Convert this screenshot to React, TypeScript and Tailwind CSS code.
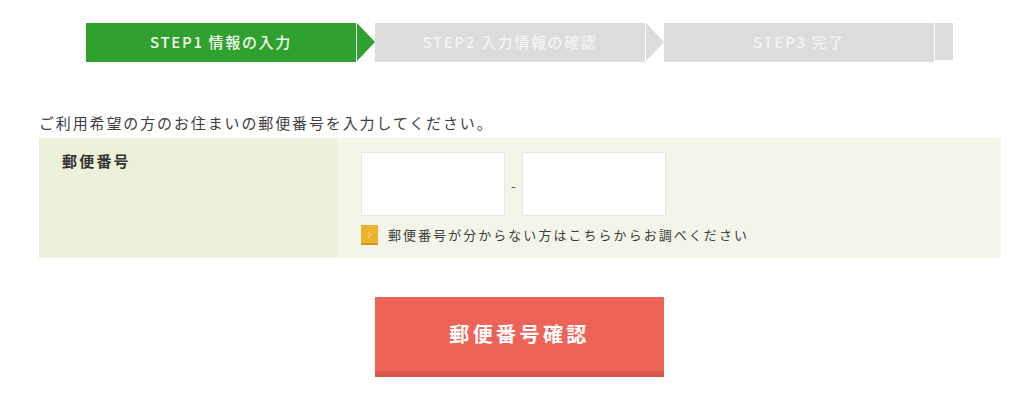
const font = "font-['Noto_Sans_CJK_JP','Noto_Sans',sans-serif]";

function Step({ label, active, arrow }: { label: string; active?: boolean; arrow?: boolean }) {
  return (
    <div
      className={
        "relative flex h-[39px] w-[270px] items-center justify-center text-[15px] font-medium tracking-[1.65px] " +
        (active ? "bg-[#2fa12e] text-[#f4f9f0]" : "bg-[#dcdcdc] text-[#f3f3f3]")
      }
    >
      {label}
      {arrow && (
        <span
          className={
            "absolute left-[271px] top-0 h-0 w-0 border-y-[19.5px] border-l-[18px] border-y-transparent " +
            (active ? "border-l-[#2fa12e]" : "border-l-[#dcdcdc]")
          }
        />
      )}
    </div>
  );
}

export default function App() {
  return (
    <div className={"h-[403px] w-[1024px] overflow-hidden bg-white text-[#333] " + font}>
      {/* Steps */}
      <div className="flex items-start pl-[86px] pt-[23px]">
        <Step label="STEP1 情報の入力" active arrow />
        <div className="w-[19px]" />
        <Step label="STEP2 入力情報の確認" arrow />
        <div className="w-[19px]" />
        <Step label="STEP3 完了" />
        <div className="ml-px h-[37px] w-[18px] bg-[#dcdcdc]" />
      </div>

      <p className="ml-[39px] mt-[50px] text-[15px] leading-[22px] tracking-[1.87px] text-[#3d3d3d]">
        ご利用希望の方のお住まいの郵便番号を入力してください。
      </p>

      {/* Form table */}
      <div className="ml-[39px] mt-[4px] flex h-[120px] w-[962px] bg-[#f2f5e7]">
        <div className="w-[298px] bg-[#ebf0d8] pl-[23px] pt-[11px] text-[15px] font-bold leading-[24px] tracking-[2.2px] text-[#333]">
          郵便番号
        </div>
        <div className="pl-[24px] pt-[14px]">
          <div className="flex items-center">
            <input className="h-[64px] w-[144px] border border-[#e6e8dc] bg-white" />
            <span className="w-[17px] pt-[2px] text-center text-[14px] text-[#555]">-</span>
            <input className="h-[64px] w-[144px] border border-[#e6e8dc] bg-white" />
          </div>
          <a className="mt-[9px] flex items-center text-[13px] leading-[20px] tracking-[2.04px] text-[#3d3d3d]">
            <span className="mr-[10px] flex h-[20px] w-[17px] items-center justify-center border-b-2 border-[#c99a1f] bg-[#ecb42e]">
              <svg width="5" height="7" viewBox="0 0 5 7" fill="none" stroke="#f8e3a8" strokeWidth="1">
                <path d="M1 .8 3.8 3.5 1 6.2" />
              </svg>
            </span>
            郵便番号が分からない方はこちらからお調べください
          </a>
        </div>
      </div>

      {/* Submit */}
      <div className="ml-[375px] mt-[39px]">
        <button className="h-[80px] w-[289px] border-b-[6px] border-[#d6574b] bg-[#ed6357] text-[20px] font-bold tracking-[3.4px] text-white">
          郵便番号確認
        </button>
      </div>
    </div>
  );
}
